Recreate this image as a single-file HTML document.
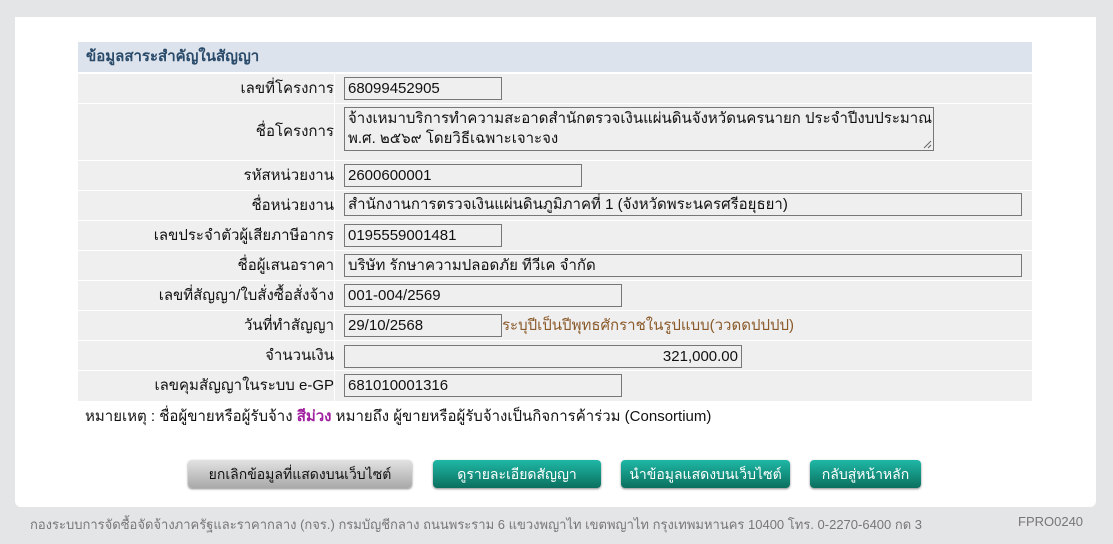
<!DOCTYPE html>
<html><head><meta charset="utf-8"><style>
body{margin:0;width:1113px;height:544px;background:#e4e5e7;font-family:"Liberation Sans","Noto Sans CJK SC",sans-serif;position:relative;overflow:hidden}
.panel{position:absolute;left:15px;top:17px;width:1081px;height:490px;background:#fff;border-radius:0 0 6px 6px}
.hdr{position:absolute;left:78px;top:42px;width:954px;height:30px;background:#dce3ec;color:#2a4a6a;font-weight:bold;font-size:15px;line-height:30px;box-sizing:border-box;padding-left:8px}
.row{position:absolute;left:78px;width:954px;background:#efefef;border-top:1px solid #fff}
.lab{position:absolute;left:0;width:256px;text-align:right;font-size:15px;color:#111;border-right:1px solid #fff;height:100%}
.inp{position:absolute;left:266px;height:23px;border:1px solid #777;background:#efefef;box-sizing:border-box;font-size:15px;line-height:21px;padding-left:3px;color:#111;white-space:nowrap}
.btn{position:absolute;top:460px;height:28px;border-radius:4px;color:#fff;font-size:14px;text-align:center;line-height:28px;box-shadow:0 1px 2px #888}
.g{background:linear-gradient(#1fb8a6,#0b6f5e)}
.foot{position:absolute;top:514px;font-size:13px;color:#777}
</style></head><body>
<div class="panel"></div>
<div class="hdr">ข้อมูลสาระสำคัญในสัญญา</div>

<div class="row" style="top:73px;height:29px"><div class="lab" style="line-height:29px">เลขที่โครงการ</div><div class="inp" style="top:3px;width:158px">68099452905</div></div>
<div class="row" style="top:103px;height:56px"><div class="lab" style="line-height:56px">ชื่อโครงการ</div><div class="inp" style="top:3px;width:590px;height:44px;line-height:20px;white-space:normal;padding-top:1px">จ้างเหมาบริการทำความสะอาดสำนักตรวจเงินแผ่นดินจังหวัดนครนายก ประจำปีงบประมาณ พ.ศ. ๒๕๖๙ โดยวิธีเฉพาะเจาะจง<svg style="position:absolute;right:1px;bottom:1px" width="10" height="10"><path d="M9 2L2 9M9 6L6 9" stroke="#666" stroke-width="1"/></svg></div></div>
<div class="row" style="top:160px;height:29px"><div class="lab" style="line-height:29px">รหัสหน่วยงาน</div><div class="inp" style="top:3px;width:238px">2600600001</div></div>
<div class="row" style="top:190px;height:29px"><div class="lab" style="line-height:29px">ชื่อหน่วยงาน</div><div class="inp" style="top:2px;width:678px">สำนักงานการตรวจเงินแผ่นดินภูมิภาคที่ 1 (จังหวัดพระนครศรีอยุธยา)</div></div>
<div class="row" style="top:220px;height:29px"><div class="lab" style="line-height:29px">เลขประจำตัวผู้เสียภาษีอากร</div><div class="inp" style="top:3px;width:158px">0195559001481</div></div>
<div class="row" style="top:250px;height:29px"><div class="lab" style="line-height:29px">ชื่อผู้เสนอราคา</div><div class="inp" style="top:3px;width:678px">บริษัท รักษาความปลอดภัย ทีวีเค จำกัด</div></div>
<div class="row" style="top:280px;height:29px"><div class="lab" style="line-height:29px">เลขที่สัญญา/ใบสั่งซื้อสั่งจ้าง</div><div class="inp" style="top:3px;width:278px">001-004/2569</div></div>
<div class="row" style="top:310px;height:29px"><div class="lab" style="line-height:29px">วันที่ทำสัญญา</div><div class="inp" style="top:3px;width:158px">29/10/2568</div><div style="position:absolute;left:424px;top:0;line-height:29px;font-size:15px;color:#8a5a2a">ระบุปีเป็นปีพุทธศักราชในรูปแบบ(ววดดปปปป)</div></div>
<div class="row" style="top:340px;height:29px"><div class="lab" style="line-height:29px">จำนวนเงิน</div><div class="inp" style="top:4px;width:398px;text-align:right;padding-right:3px">321,000.00</div></div>
<div class="row" style="top:370px;height:30px"><div class="lab" style="line-height:30px">เลขคุมสัญญาในระบบ e-GP</div><div class="inp" style="top:3px;width:278px">681010001316</div></div>

<div style="position:absolute;left:85px;top:404px;font-size:15px;color:#111">หมายเหตุ : ชื่อผู้ขายหรือผู้รับจ้าง <b style="color:#a020a0">สีม่วง</b> หมายถึง ผู้ขายหรือผู้รับจ้างเป็นกิจการค้าร่วม (Consortium)</div>

<div class="btn" style="left:188px;width:224px;background:linear-gradient(#e2e2e2,#a9a9a9);color:#111">ยกเลิกข้อมูลที่แสดงบนเว็บไซต์</div>
<div class="btn g" style="left:433px;width:168px">ดูรายละเอียดสัญญา</div>
<div class="btn g" style="left:621px;width:169px">นำข้อมูลแสดงบนเว็บไซต์</div>
<div class="btn g" style="left:810px;width:111px">กลับสู่หน้าหลัก</div>

<div class="foot" style="left:30px">กองระบบการจัดซื้อจัดจ้างภาครัฐและราคากลาง (กจร.) กรมบัญชีกลาง ถนนพระราม 6 แขวงพญาไท เขตพญาไท กรุงเทพมหานคร 10400 โทร. 0-2270-6400 กด 3</div>
<div class="foot" style="left:1018px">FPRO0240</div>
</body></html>
